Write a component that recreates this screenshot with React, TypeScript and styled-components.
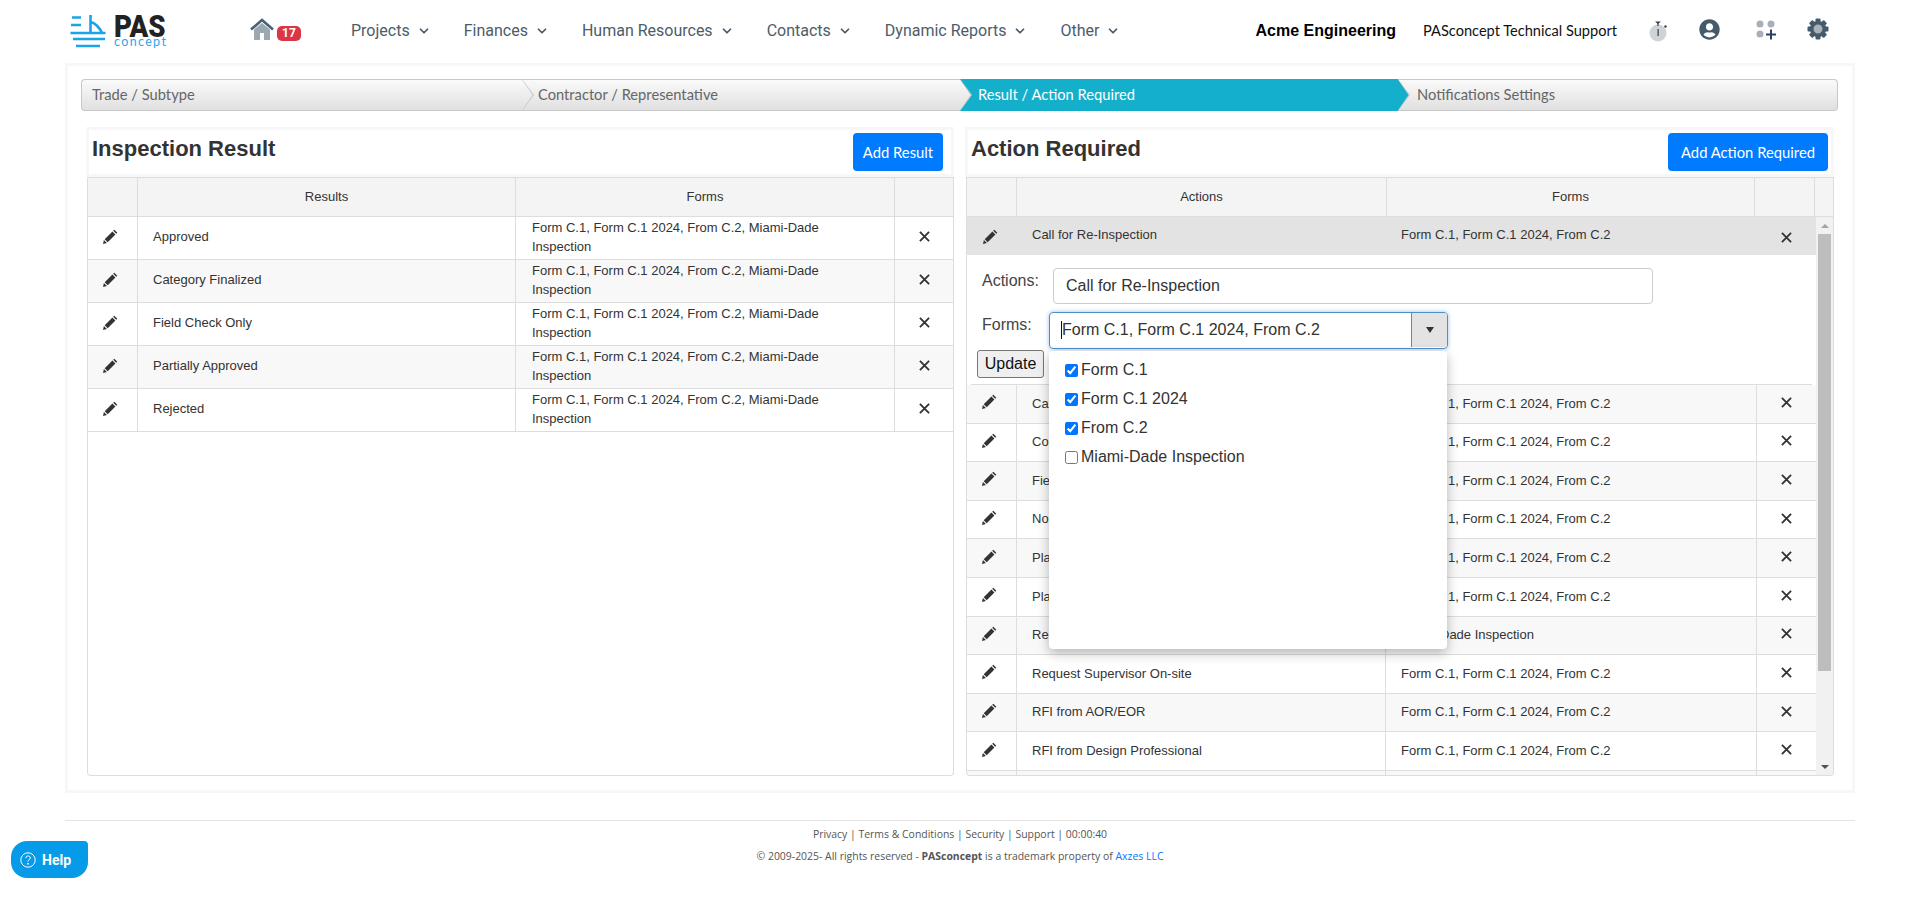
import React from "react";
import styled, { createGlobalStyle } from "styled-components";
import { ChevronDown } from "lucide-react";
import { FaUserCircle } from "react-icons/fa";

const Global = createGlobalStyle`
  html, body { margin: 0; padding: 0; background: #fff; }
  body { font-family: "Liberation Sans", Arial, sans-serif; color: #333; }
  * { box-sizing: border-box; }
`;

const Page = styled.div`
  width: 1920px;
  height: 911px;
  overflow: hidden;
  position: relative;
`;

const Header = styled.header`
  height: 63px;
  display: flex;
  align-items: center;
  padding: 0 91px 2px 70px;
`;

const Logo = styled.div`
  display: flex;
  align-items: flex-start;
  gap: 8px;
  width: 180px;
  height: 34px;
  margin-top: 3px;
  flex: none;
`;

const LogoWords = styled.div`
  display: flex;
  flex-direction: column;
  width: 54px;
`;

const LogoPas = styled.span`
  font-family: Roboto, sans-serif;
  font-weight: 900;
  font-size: 31px;
  line-height: 23px;
  height: 22px;
  color: #222;
  transform: scaleX(0.89);
  transform-origin: left center;
  white-space: nowrap;
`;

const LogoConcept = styled.span`
  font-family: Lato, sans-serif;
  font-size: 12.5px;
  line-height: 10px;
  letter-spacing: 1.35px;
  color: #2ba6ea;
  white-space: nowrap;
`;

const HomeLink = styled.div`
  display: flex;
  align-items: center;
  gap: 3px;
  width: 101px;
  flex: none;
  svg { margin-bottom: 3px; }
`;

const Badge = styled.span`
  width: 24px;
  height: 15px;
  margin-top: 5px;
  border-radius: 5px;
  background: #dc3545;
  color: #fff;
  font-family: Roboto, sans-serif;
  font-weight: 700;
  font-size: 12px;
  line-height: 15px;
  text-align: center;
`;

const Nav = styled.nav`
  display: flex;
  gap: 33px;
  align-items: center;
`;

const NavItem = styled.span`
  display: flex;
  align-items: center;
  gap: 7px;
  font-family: Roboto, sans-serif;
  font-size: 16px;
  color: #4d5c69;
  white-space: nowrap;
  svg { color: #46596a; }
`;

const HeaderRight = styled.div`
  margin-left: auto;
  display: flex;
  align-items: center;
`;

const Company = styled.span`
  font-weight: 700;
  font-size: 16px;
  color: #000;
  margin-right: 27px;
  white-space: nowrap;
`;

const Support = styled.span`
  font-family: Lato, sans-serif;
  font-size: 14.6px;
  color: #111;
  margin-right: 32px;
  white-space: nowrap;
`;

const IconSlot = styled.span<{ $gap?: number; $up?: number }>`
  display: flex;
  align-items: center;
  justify-content: center;
  margin-left: ${(p) => p.$gap ?? 0}px;
  margin-bottom: ${(p) => p.$up ?? 0}px;
`;

const Panel = styled.main`
  margin: 0 65px;
  height: 730px;
  border: 3px solid #f7f7f7;
  padding: 13px 14px 14px 13px;
`;

const Steps = styled.div`
  display: grid;
  grid-template-columns: 441px 438px 438px 1fr;
  height: 32px;
  border-radius: 4px;
`;

const Step = styled.div<{ $active?: boolean; $first?: boolean; $last?: boolean; $pad: number }>`
  position: relative;
  display: flex;
  align-items: center;
  padding: 0 0 2px ${(p) => p.$pad}px;
  font-family: Lato, sans-serif;
  font-size: 14.7px;
  color: ${(p) => (p.$active ? "#fff" : "#666")};
  background: ${(p) => (p.$active ? "#14afcb" : "linear-gradient(#fafafa, #e0e0e0)")};
  border-top: 1px solid ${(p) => (p.$active ? "#14afcb" : "#c8c8c8")};
  border-bottom: 1px solid ${(p) => (p.$active ? "#14afcb" : "#c8c8c8")};
  border-left: ${(p) => (p.$first ? "1px solid #c8c8c8" : "0")};
  border-right: ${(p) => (p.$last ? "1px solid #c8c8c8" : "0")};
  border-radius: ${(p) => (p.$first ? "4px 0 0 4px" : p.$last ? "0 4px 4px 0" : "0")};
  &::before {
    content: ${(p) => (p.$last ? "none" : '""')};
    position: absolute;
    z-index: 1;
    top: -1px;
    bottom: -1px;
    right: -12px;
    width: 12px;
    background: #c9c9c9;
    clip-path: polygon(0 0, 100% 50%, 0 100%);
  }
  &::after {
    content: ${(p) => (p.$last ? "none" : '""')};
    position: absolute;
    z-index: 2;
    top: -1px;
    bottom: -1px;
    right: -10.5px;
    width: 11px;
    background: ${(p) => (p.$active ? "#14afcb" : "linear-gradient(#fafafa, #e0e0e0)")};
    clip-path: polygon(0 0, 100% 50%, 0 100%);
  }
`;

const Columns = styled.div`
  display: grid;
  grid-template-columns: 868px 869px;
  gap: 11px;
  margin: 16px 0 0 5px;
`;

const Column = styled.section`
  display: flex;
  flex-direction: column;
  height: 649px;
`;

const TitleBar = styled.div<{ $pad: number }>`
  height: 50px;
  flex: none;
  border: 3px solid #f7f7f7;
  display: flex;
  align-items: flex-start;
  justify-content: space-between;
  padding: 3px ${(p) => p.$pad}px 0 3px;
`;

const Title = styled.h2`
  margin: 0;
  font-size: 22px;
  font-weight: 700;
  line-height: 30px;
  padding-top: 1px;
  color: #333;
`;

const AddButton = styled.button<{ $w: number }>`
  width: ${(p) => p.$w}px;
  height: 38px;
  border: 0;
  border-radius: 4px;
  background: #007bff;
  color: #fff;
  font-family: Lato, sans-serif;
  font-size: 14.8px;
  padding: 0;
`;

const TableBox = styled.div`
  flex: 1;
  min-height: 0;
  margin-left: 1px;
  border: 1px solid #ddd;
  border-top-width: 0;
  border-radius: 0 0 4px 4px;
  display: flex;
  flex-direction: column;
  overflow: hidden;
`;

const Row = styled.div<{ $cols: string; $h: number; $bg?: string; $line?: boolean }>`
  flex: none;
  display: grid;
  grid-template-columns: ${(p) => p.$cols};
  height: ${(p) => p.$h}px;
  background: ${(p) => p.$bg ?? "#fff"};
  border-bottom: ${(p) => (p.$line === false ? "0" : "1px solid #ddd")};
  font-size: 13px;
  color: #333;
`;

const HeadRow = styled(Row)`
  border-top: 1px solid #ddd;
`;

const HeadCell = styled.div`
  display: flex;
  align-items: center;
  justify-content: center;
  border-right: 1px solid #ddd;
  padding-bottom: 1px;
  &:last-child { border-right: 0; }
`;

const Cell = styled.div<{ $plain?: boolean; $pad?: number; $pb?: number }>`
  display: flex;
  align-items: center;
  padding: 0 ${(p) => p.$pad ?? 15}px ${(p) => p.$pb ?? 2}px ${(p) => p.$pad ?? 15}px;
  line-height: 18.5px;
  border-right: ${(p) => (p.$plain ? "0" : "1px solid #ddd")};
  white-space: ${(p) => (p.$pad ? "normal" : "nowrap")};
`;

const IconCell = styled.div<{ $plain?: boolean; $top?: number; $right?: number }>`
  display: flex;
  align-items: center;
  justify-content: center;
  padding: ${(p) => p.$top ?? 0}px ${(p) => p.$right ?? 0}px ${(p) => (p.$top ? 0 : 3)}px 0;
  border-right: ${(p) => (p.$plain ? "0" : "1px solid #ddd")};
`;

const ScrollArea = styled.div`
  flex: 1;
  min-height: 0;
  display: flex;
`;

const RowList = styled.div`
  flex: 1;
  min-width: 0;
  overflow: hidden;
`;

const ScrollTrack = styled.div`
  width: 17px;
  flex: none;
  background: #f1f1f1;
  display: flex;
  flex-direction: column;
  align-items: center;
`;

const ScrollButton = styled.div`
  height: 17px;
  flex: none;
  display: flex;
  align-items: center;
  justify-content: center;
`;

const ArrowUp = styled.span`
  width: 0;
  height: 0;
  border-left: 4px solid transparent;
  border-right: 4px solid transparent;
  border-bottom: 4px solid #a3a3a3;
`;

const ArrowDown = styled.span`
  width: 0;
  height: 0;
  border-left: 4px solid transparent;
  border-right: 4px solid transparent;
  border-top: 4px solid #505050;
`;

const ScrollThumb = styled.div`
  width: 13px;
  height: 437px;
  flex: none;
  background: #bdbdbd;
`;

const ScrollRest = styled.div`
  flex: 1;
`;

const EditForm = styled.div`
  height: 130px;
  margin: 0 4px;
  padding: 13px 0 0 6px;
  border-bottom: 1px solid #ddd;
  display: flex;
  flex-direction: column;
  font-size: 16px;
  color: #333;
`;

const FormLine = styled.div`
  display: flex;
  align-items: flex-start;
`;

const FormLabel = styled.label<{ $w: number; $top: number }>`
  width: ${(p) => p.$w}px;
  flex: none;
  padding: ${(p) => p.$top}px 0 0 5px;
  line-height: 20px;
  color: #444;
`;

const TextBox = styled.input`
  width: 600px;
  height: 36px;
  border: 1px solid #ccc;
  border-radius: 4px;
  padding: 0 12px;
  font: inherit;
  color: #333;
  outline: none;
`;

const ComboWrap = styled.div`
  position: relative;
  width: 399px;
  height: 37px;
  margin-top: 8px;
`;

const Combo = styled.div`
  height: 37px;
  display: flex;
  align-items: stretch;
  border: 1px solid #4f8fc9;
  border-radius: 4px;
  box-shadow: 0 0 4px rgba(70, 140, 210, 0.55);
  overflow: hidden;
`;

const ComboValue = styled.div`
  flex: 1;
  display: flex;
  align-items: center;
  padding: 0 0 1px 11px;
  color: #333;
`;

const Caret = styled.span`
  width: 1px;
  height: 18px;
  background: #111;
`;

const ComboToggle = styled.div`
  width: 36px;
  flex: none;
  display: flex;
  align-items: center;
  justify-content: center;
  background: #e3e3e3;
  border-left: 1px solid #4f8fc9;
  margin-bottom: 1px;
`;

const Triangle = styled.span`
  width: 0;
  height: 0;
  border-left: 4px solid transparent;
  border-right: 4px solid transparent;
  border-top: 6px solid #333;
`;

const Popup = styled.div`
  position: absolute;
  z-index: 5;
  left: 0;
  right: 1px;
  top: 39px;
  height: 298px;
  background: #fff;
  border-radius: 4px;
  box-shadow: 0 4px 12px rgba(0, 0, 0, 0.28);
  padding: 4px 16px;
`;

const Option = styled.label`
  display: flex;
  align-items: center;
  height: 29px;
  font-size: 16px;
  color: #333;
`;

const Check = styled.input`
  width: 13px;
  height: 13px;
  margin: 2px 3px 0 0;
  flex: none;
`;

const UpdateButton = styled.button`
  width: 67px;
  height: 28px;
  margin: 1px 0 0 0;
  padding: 0;
  font: 16px "Liberation Sans", Arial, sans-serif;
  color: #111;
  background: #efefef;
  border: 1px solid #767676;
  border-radius: 3px;
`;

const FooterArea = styled.footer`
  margin: 27px 65px 0;
  border-top: 1px solid #e4e4e4;
  padding-top: 5px;
  text-align: center;
  font-family: "Open Sans", sans-serif;
  font-size: 10.45px;
  color: #555;
`;

const FootLine = styled.div`
  height: 22px;
  line-height: 16px;
`;

const FootLink = styled.span`
  color: #007bff;
`;

const FootStrong = styled.b`
  font-weight: 700;
`;

const Help = styled.div`
  position: absolute;
  left: 11px;
  top: 841px;
  width: 77px;
  height: 37px;
  border-radius: 16px 4px 16px 16px;
  background: #059be8;
  color: #fff;
  display: flex;
  align-items: center;
  gap: 6px;
  padding-left: 9px;
  font-family: Roboto, sans-serif;
  font-weight: 700;
  font-size: 14px;
`;

const Pencil = () => (
  <svg width="16" height="16" viewBox="0 0 16 16" fill="#333">
    <path d="M1 15l.9-3.9 3 3z" />
    <path d="M2.7 10.3l7.7-7.7 3 3-7.7 7.7z" />
    <path d="M11.2 1.8l1.1-1.1 3 3-1.1 1.1z" />
  </svg>
);

const Cross = () => (
  <svg width="11" height="11" viewBox="0 0 12 12" stroke="#333" strokeWidth="2" fill="none">
    <path d="M1 1l10 10M11 1L1 11" />
  </svg>
);

const LogoMark = () => (
  <svg width="36" height="34" viewBox="0 0 36 34" stroke="#1ba3ea" strokeWidth="2.6" fill="none">
    <path d="M2 2.5h9M1 10h10M0.5 18h35M3 24h32M6 31h24" />
    <path d="M20.5 0v18M21 7c4 1 9 6 11 11" />
  </svg>
);

const HomeIcon = () => (
  <svg width="24" height="22" viewBox="0 0 24 22">
    <path d="M4 11.5L12 5l8 6.5V22h-6v-7h-4v7H4z" fill="#9aa8b1" />
    <path d="M1 11.5L12 2l11 9.5" fill="none" stroke="#4a6175" strokeWidth="2.6" />
  </svg>
);

const Stopwatch = () => (
  <svg width="18" height="22" viewBox="0 0 18 22">
    <circle cx="9" cy="13" r="8.5" fill="#d0d3d6" />
    <path d="M6 1.5h6L9 4z" fill="#2f3f50" />
    <rect x="8.4" y="3" width="1.2" height="3" fill="#2f3f50" />
    <rect x="8.5" y="9" width="1.2" height="7" fill="#2f3f50" />
    <circle cx="16.5" cy="6.5" r="1.2" fill="#2f3f50" />
  </svg>
);

const Apps = () => (
  <svg width="20" height="22" viewBox="0 0 20 22">
    <circle cx="4" cy="5" r="3.5" fill="#a9afb9" />
    <circle cx="15" cy="5" r="3.5" fill="#a9afb9" />
    <circle cx="4" cy="15" r="3.5" fill="#a9afb9" />
    <path d="M15 10.5v10M10 15.5h10" stroke="#2b4360" strokeWidth="2" />
  </svg>
);

const Gear = () => (
  <svg width="22" height="22" viewBox="0 0 22 22">
    {[0, 45, 90, 135, 180, 225, 270, 315].map((a) => (
      <rect key={a} x="8.5" y="0.5" width="5" height="5" rx="1" fill="#455a6b" transform={`rotate(${a} 11 11)`} />
    ))}
    <circle cx="11" cy="11" r="6.3" fill="#a9b1b9" stroke="#455a6b" strokeWidth="3.6" />
  </svg>
);

const HelpIcon = () => (
  <svg width="16" height="16" viewBox="0 0 16 16" fill="none" stroke="#fff" strokeWidth="1">
    <circle cx="8" cy="8" r="7.2" />
    <path d="M5.8 6.2c0-3 4.5-3 4.5-.2 0 1.8-2.3 1.6-2.3 3.6" />
    <circle cx="8" cy="11.8" r=".5" fill="#fff" />
  </svg>
);

const allForms = "Form C.1, Form C.1 2024, From C.2, Miami-Dade Inspection";
const threeForms = "Form C.1, Form C.1 2024, From C.2";

const results = ["Approved", "Category Finalized", "Field Check Only", "Partially Approved", "Rejected"];

const actions: [string, string][] = [
  ["Call Inspector", threeForms],
  ["Correct Violations", threeForms],
  ["Field Check", threeForms],
  ["No Action Required", threeForms],
  ["Plan Review Required", threeForms],
  ["Plans on Site", threeForms],
  ["Re-Submit Plans", "Miami-Dade Inspection"],
  ["Request Supervisor On-site", threeForms],
  ["RFI from AOR/EOR", threeForms],
  ["RFI from Design Professional", threeForms],
  ["Schedule Meeting", threeForms],
];

const navItems = ["Projects", "Finances", "Human Resources", "Contacts", "Dynamic Reports", "Other"];
const options: [string, boolean][] = [
  ["Form C.1", true],
  ["Form C.1 2024", true],
  ["From C.2", true],
  ["Miami-Dade Inspection", false],
];

const leftCols = "50px 378px 379px 1fr";
const rightHead = "50px 370px 368px 60px 1fr";
const rightBody = "50px 369px 371px 1fr";

export default function App() {
  return (
    <Page>
      <Global />
      <Header>
        <Logo>
          <LogoMark />
          <LogoWords>
            <LogoPas>PAS</LogoPas>
            <LogoConcept>concept</LogoConcept>
          </LogoWords>
        </Logo>
        <HomeLink>
          <HomeIcon />
          <Badge>17</Badge>
        </HomeLink>
        <Nav>
          {navItems.map((n) => (
            <NavItem key={n}>
              {n}
              <ChevronDown size={14} strokeWidth={3} />
            </NavItem>
          ))}
        </Nav>
        <HeaderRight>
          <Company>Acme Engineering</Company>
          <Support>PASconcept Technical Support</Support>
          <IconSlot><Stopwatch /></IconSlot>
          <IconSlot $gap={32} $up={3}><FaUserCircle size={21} color="#455a6b" /></IconSlot>
          <IconSlot $gap={36} $up={1}><Apps /></IconSlot>
          <IconSlot $gap={31} $up={3}><Gear /></IconSlot>
        </HeaderRight>
      </Header>
      <Panel>
        <Steps>
          <Step $first $pad={10}>Trade / Subtype</Step>
          <Step $pad={16}>Contractor / Representative</Step>
          <Step $active $pad={18}>Result / Action Required</Step>
          <Step $last $pad={19}>Notifications Settings</Step>
        </Steps>
        <Columns>
          <Column>
            <TitleBar $pad={8}>
              <Title>Inspection Result</Title>
              <AddButton $w={90}>Add Result</AddButton>
            </TitleBar>
            <TableBox>
              <HeadRow $cols={leftCols} $h={40} $bg="#f4f4f4">
                <HeadCell />
                <HeadCell>Results</HeadCell>
                <HeadCell>Forms</HeadCell>
                <HeadCell />
              </HeadRow>
              {results.map((r, i) => (
                <Row key={r} $cols={leftCols} $h={43} $bg={i % 2 ? "#f8f8f8" : "#fff"}>
                  <IconCell $right={5}><Pencil /></IconCell>
                  <Cell $pb={1}>{r}</Cell>
                  <Cell $pad={16} $pb={1}>{allForms}</Cell>
                  <IconCell $plain><Cross /></IconCell>
                </Row>
              ))}
            </TableBox>
          </Column>
          <Column>
            <TitleBar $pad={3}>
              <Title>Action Required</Title>
              <AddButton $w={160}>Add Action Required</AddButton>
            </TitleBar>
            <TableBox>
              <HeadRow $cols={rightHead} $h={40} $bg="#f4f4f4">
                <HeadCell />
                <HeadCell>Actions</HeadCell>
                <HeadCell>Forms</HeadCell>
                <HeadCell />
                <HeadCell />
              </HeadRow>
              <ScrollArea>
                <RowList>
                  <Row $cols={rightBody} $h={38} $bg="#e3e3e3" $line={false}>
                    <IconCell $plain $top={2} $right={5}><Pencil /></IconCell>
                    <Cell $plain $pb={1}>Call for Re-Inspection</Cell>
                    <Cell $plain $pb={1}>{threeForms}</Cell>
                    <IconCell $plain $top={2}><Cross /></IconCell>
                  </Row>
                  <EditForm>
                    <FormLine>
                      <FormLabel $w={76} $top={3}>Actions:</FormLabel>
                      <TextBox defaultValue="Call for Re-Inspection" />
                    </FormLine>
                    <FormLine>
                      <FormLabel $w={72} $top={11}>Forms:</FormLabel>
                      <ComboWrap>
                        <Combo>
                          <ComboValue><Caret />{threeForms}</ComboValue>
                          <ComboToggle><Triangle /></ComboToggle>
                        </Combo>
                        <Popup>
                          {options.map(([label, on]) => (
                            <Option key={label}>
                              <Check type="checkbox" defaultChecked={on} />
                              {label}
                            </Option>
                          ))}
                        </Popup>
                      </ComboWrap>
                    </FormLine>
                    <UpdateButton>Update</UpdateButton>
                  </EditForm>
                  {actions.map(([a, f], i) => (
                    <Row key={a} $cols={rightBody} $h={38.6} $bg={i % 2 ? "#fff" : "#f8f8f8"}>
                      <IconCell $right={5}><Pencil /></IconCell>
                      <Cell $pb={0}>{a}</Cell>
                      <Cell $pb={0}>{f}</Cell>
                      <IconCell $plain><Cross /></IconCell>
                    </Row>
                  ))}
                </RowList>
                <ScrollTrack>
                  <ScrollButton><ArrowUp /></ScrollButton>
                  <ScrollThumb />
                  <ScrollRest />
                  <ScrollButton><ArrowDown /></ScrollButton>
                </ScrollTrack>
              </ScrollArea>
            </TableBox>
          </Column>
        </Columns>
      </Panel>
      <FooterArea>
        <FootLine>Privacy | Terms &amp; Conditions | Security | Support | 00:00:40</FootLine>
        <FootLine>
          © 2009-2025- All rights reserved - <FootStrong>PASconcept</FootStrong> is a trademark property of <FootLink>Axzes LLC</FootLink>
        </FootLine>
      </FooterArea>
      <Help>
        <HelpIcon />
        Help
      </Help>
    </Page>
  );
}
